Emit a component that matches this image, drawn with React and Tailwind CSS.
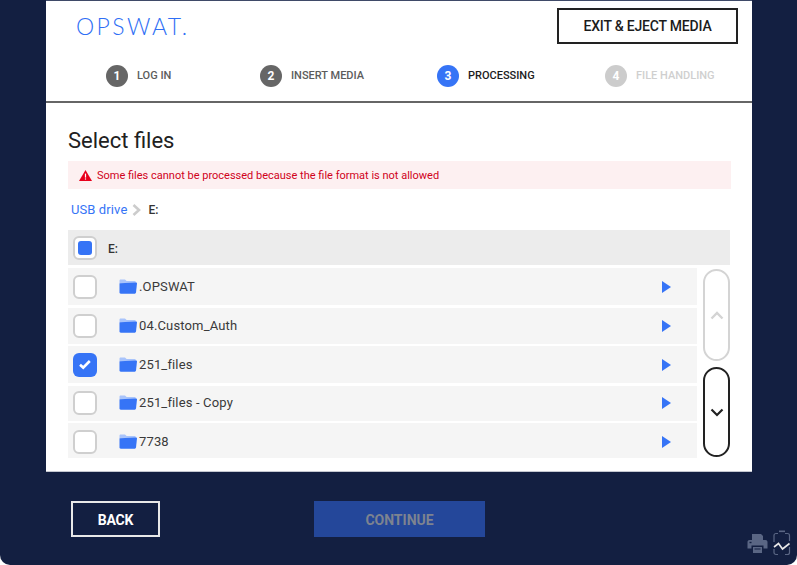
import React from "react";

const steps = [
  { num: 1, label: "LOG IN", width: "w-[154px]", circle: "bg-[#666666] text-white", text: "text-[#5c5c5c]" },
  { num: 2, label: "INSERT MEDIA", width: "w-[177px]", circle: "bg-[#666666] text-white", text: "text-[#5c5c5c]" },
  { num: 3, label: "PROCESSING", width: "w-[168px]", circle: "bg-[#3674f6] text-white", text: "text-[#1c1c1c]" },
  { num: 4, label: "FILE HANDLING", width: "w-[140px]", circle: "bg-[#cccccc] text-white", text: "text-[#cfcfcf]" },
];

const folders = [
  { name: ".OPSWAT", checked: false, row: "h-[37px]" },
  { name: "04.Custom_Auth", checked: false, row: "h-[36px]" },
  { name: "251_files", checked: true, row: "h-[37px]" },
  { name: "251_files - Copy", checked: false, row: "h-[35px] pb-[1px]" },
  { name: "7738", checked: false, row: "h-[34.5px] pt-[2px]" },
];

const FolderIcon = () => (
  <svg width="18" height="15" viewBox="0 0 18 15" className="shrink-0">
    <path d="M0.5 1.6C0.5 0.8 1 0.4 1.7 0.4H6L7.6 2H15.5C16.3 2 16.8 2.5 16.8 3.2V4H0.5Z" fill="#a9c4fb" />
    <path d="M0.5 4.2L17.2 3.4C17.7 3.4 18 3.7 18 4.2L17 13.6C16.9 14.3 16.5 14.7 15.8 14.7H1.8C1 14.7 0.5 14.2 0.5 13.5Z" fill="#3674f6" />
  </svg>
);

const Checkbox = ({ state }) => {
  if (state === "checked") {
    return (
      <div className="w-[24px] h-[24px] rounded-[6px] bg-[#3674f6] flex items-center justify-center shrink-0">
        <svg width="14" height="11" viewBox="0 0 14 11">
          <path d="M2 5.8L5.2 8.6L11.8 2" fill="none" stroke="#ffffff" strokeWidth="2.6" />
        </svg>
      </div>
    );
  }
  return (
    <div className="w-[24px] h-[24px] rounded-[6px] bg-white border-2 border-[#cfcfcf] flex items-center justify-center shrink-0">
      {state === "partial" && <div className="w-[14px] h-[14px] rounded-[3px] bg-[#3674f6]" />}
    </div>
  );
};

const App = () => {
  return (
    <div className="w-[797px] h-[565px] bg-white overflow-hidden" style={{ fontFamily: "Roboto, sans-serif" }}>
      <div className="w-full h-full bg-[#131f41] rounded-b-[10px] pl-[46px] flex flex-col">
        <div className="w-[706px] h-[472px] bg-white border-t border-[#3f4a68] border-b border-b-[#c4c7d0] shrink-0 flex flex-col">
          {/* header */}
          <div className="h-[52px] flex items-start justify-between pl-[30px] pr-[14px]">
            <div
              className="text-[#2f6ff5] text-[23px] font-light tracking-[2.4px] leading-[28px] mt-[11px]"
              style={{ fontFamily: "Lato, sans-serif" }}
            >
              OPSWAT.
            </div>
            <button className="w-[181px] h-[36px] mt-[7px] border-2 border-[#222222] text-[14px] tracking-[-0.2px] font-medium text-[#1c1c1c] flex items-center justify-center">
              EXIT &amp; EJECT MEDIA
            </button>
          </div>

          {/* stepper */}
          <div className="h-[50px] border-b-2 border-[#666666] flex items-start pl-[60px] pt-[12px]">
            {steps.map((s) => (
              <div key={s.num} className={`${s.width} flex items-center gap-[9px] shrink-0`}>
                <div className={`w-[22px] h-[22px] rounded-full flex items-center justify-center text-[12px] font-bold ${s.circle}`}>
                  {s.num}
                </div>
                <span className={`text-[11px] font-medium ${s.text}`}>{s.label}</span>
              </div>
            ))}
          </div>

          {/* body */}
          <div className="px-[22px] flex flex-col">
            <h1 className="text-[22px] leading-[26px] text-[#212121] mt-[25px]">Select files</h1>
            <div className="h-[28px] mt-[7px] w-[663px] bg-[#fdf0f1] flex items-center pl-[11px] gap-[5px] text-[11px] text-[#d0021b]">
              <svg width="13" height="11" viewBox="0 0 13 11">
                <path d="M6.5 0L13 11H0Z" fill="#e8001c" />
                <rect x="5.9" y="3.6" width="1.2" height="4" fill="#ffffff" />
                <rect x="5.9" y="8.4" width="1.2" height="1.2" fill="#ffffff" />
              </svg>
              <span className="pt-[2px]">Some files cannot be processed because the file format is not allowed</span>
            </div>
            <div className="h-[20px] mt-[10px] pl-[3px] pt-[1px] flex items-center text-[13px]">
              <span className="text-[#3674f6] tracking-[0.1px]">USB drive</span>
              <svg width="11" height="14" viewBox="0 0 11 14" className="ml-[4px] mr-[6px]">
                <path d="M2.5 2L8 7L2.5 12" fill="none" stroke="#cccccc" strokeWidth="2.6" />
              </svg>
              <span className="text-[#333333] font-medium text-[12px]">E:</span>
            </div>

            <div className="h-[35px] mt-[11px] w-[662px] bg-[#ececec] flex items-center pl-[5px]">
              <Checkbox state="partial" />
              <span className="ml-[11px] pt-[2px] text-[12px] font-medium text-[#333333]">E:</span>
            </div>

            <div className="flex mt-[3px] w-[662px] justify-between">
              <div className="w-[629px] flex flex-col gap-[2.6px]">
                {folders.map((f) => (
                  <div key={f.name} className={`${f.row} bg-[#f5f5f5] flex items-center pl-[5px] pr-[25px]`}>
                    <Checkbox state={f.checked ? "checked" : "empty"} />
                    <div className="ml-[22px] mr-[2px]">
                      <FolderIcon />
                    </div>
                    <span className="text-[13px] tracking-[0.15px] text-[#3a3a3a] flex-1">{f.name}</span>
                    <svg width="9" height="12" viewBox="0 0 9 12" className="-ml-[1px] mr-[1px]">
                      <path d="M0 0L9 6L0 12Z" fill="#3674f6" />
                    </svg>
                  </div>
                ))}
              </div>
              <div className="w-[27px] flex flex-col gap-[6px] pt-[1px]">
                <button className="h-[92px] rounded-[14px] border-2 border-[#d4d4d4] bg-white flex items-center justify-center">
                  <svg width="14" height="9" viewBox="0 0 14 9">
                    <path d="M1.5 7.5L7 2L12.5 7.5" fill="none" stroke="#d4d4d4" strokeWidth="2.4" />
                  </svg>
                </button>
                <button className="h-[90px] rounded-[14px] border-2 border-[#222222] bg-white flex items-center justify-center">
                  <svg width="14" height="9" viewBox="0 0 14 9">
                    <path d="M1.5 1.5L7 7L12.5 1.5" fill="none" stroke="#222222" strokeWidth="2.2" />
                  </svg>
                </button>
              </div>
            </div>
          </div>
        </div>

        {/* footer */}
        <div className="relative flex items-start pl-[25px] mt-[29px]">
          <button className="w-[89px] h-[36px] pt-[2px] border-2 border-[#e8e8e8] text-white text-[14px] font-bold tracking-[-0.2px] flex items-center justify-center">
            BACK
          </button>
          <button className="ml-[154px] w-[171px] h-[36px] pt-[2px] bg-[#24479a] text-[#7d8390] text-[14px] font-bold flex items-center justify-center">
            CONTINUE
          </button>
          <div className="absolute left-[701px] top-[29px] flex items-center gap-[5px]">
            <svg width="21" height="21" viewBox="0 0 21 21">
              <path d="M5 1H14L16 3V7H5Z" fill="#5a6684" />
              <path d="M2.5 7H18.5C19.6 7 20.5 7.9 20.5 9V15.5H16.5V12.5H4.5V15.5H0.5V9C0.5 7.9 1.4 7 2.5 7Z" fill="#5a6684" />
              <rect x="6" y="14" width="9" height="6" fill="#5a6684" />
              <rect x="2.5" y="8.8" width="2" height="1.4" fill="#131f41" />
              <rect x="7.5" y="15.5" width="6" height="1" fill="#131f41" />
            </svg>
            <svg width="18" height="26" viewBox="0 0 18 26">
              <rect x="6" y="0.5" width="6" height="1.6" fill="#5a6684" />
              <path d="M5 3.5H3C1.9 3.5 1 4.4 1 5.5V12M5 24.5H3C1.9 24.5 1 23.6 1 22.5V19M12 3.5H14.5C15.6 3.5 16.5 4.4 16.5 5.5V11M12 24.5H14.5C15.6 24.5 16.5 23.6 16.5 22.5V17" fill="none" stroke="#5a6684" strokeWidth="1.2" />
              <path d="M1 17L5.5 13.5L9.5 19L16.5 13.5" fill="none" stroke="#e8e8e8" strokeWidth="1.6" />
            </svg>
          </div>
        </div>
      </div>
    </div>
  );
};

export default App;
